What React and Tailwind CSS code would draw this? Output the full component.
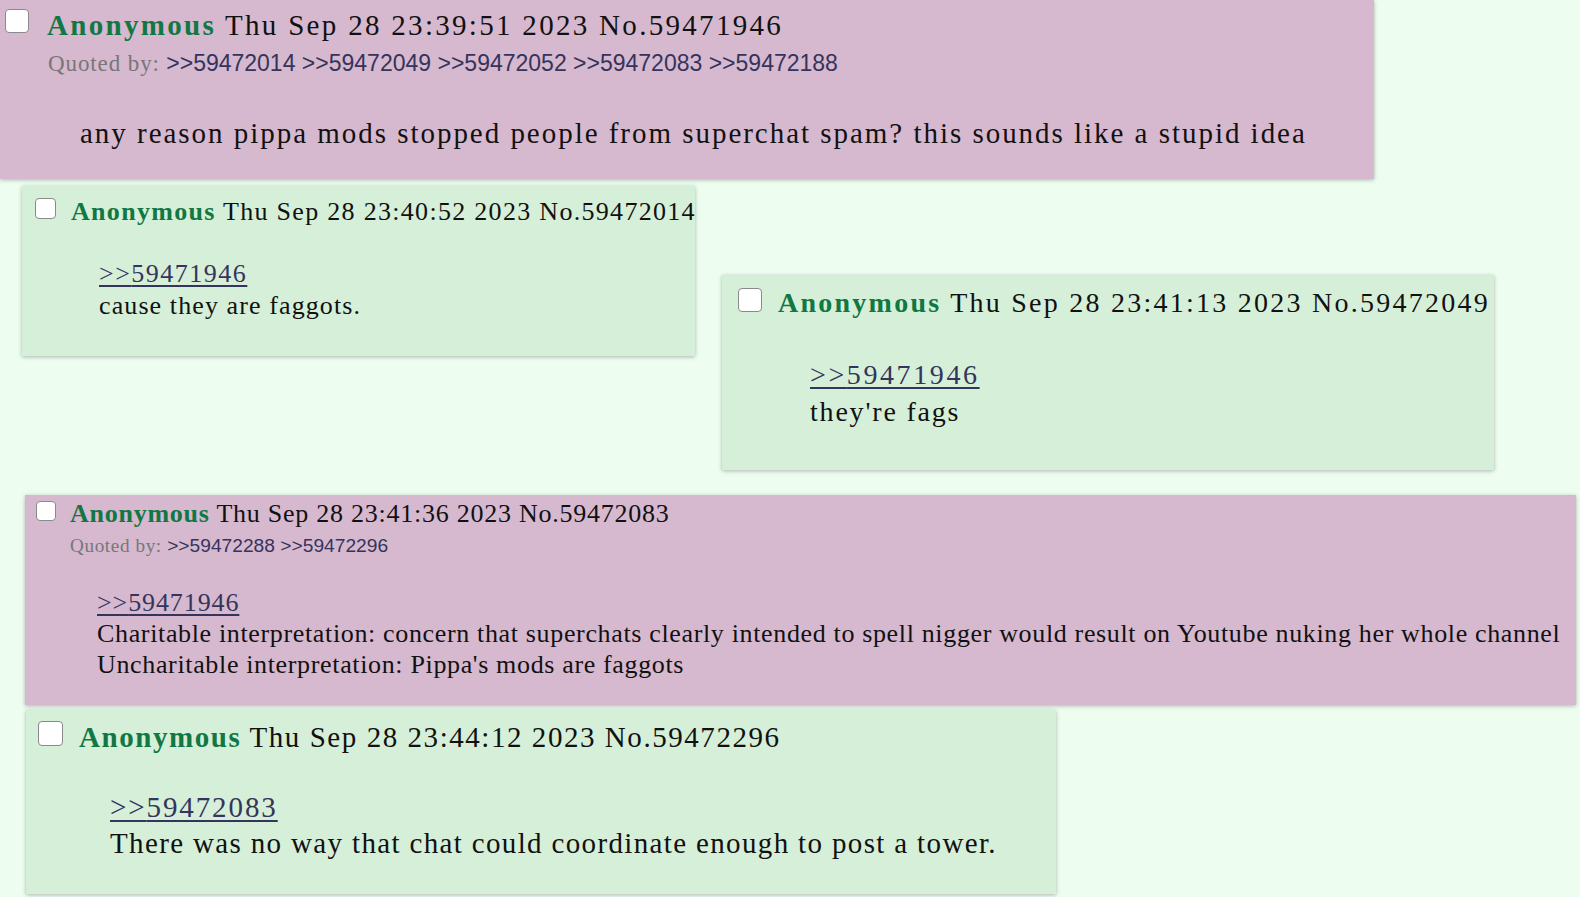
import React from 'react';

function Checkbox({ className }) {
  return (
    <span
      className={`block shrink-0 rounded-[4px] border-[1.5px] border-[#8a8a8a] bg-white ${className}`}
    />
  );
}

function Backlink({ id }) {
  return (
    <span className="font-['Liberation_Sans',Arial,sans-serif] text-[#34345c]">{' '}&gt;&gt;{id}</span>
  );
}

function QuoteLink({ id, className }) {
  return (
    <div className={className}>
      <span className="text-[#34345c] underline decoration-2 underline-offset-[3px]">&gt;&gt;{id}</span>
    </div>
  );
}

function Header({ date, no, className }) {
  return (
    <div className={`whitespace-nowrap ${className}`}>
      <span className="font-bold text-[#117743]">Anonymous</span> {date} No.{no}
    </div>
  );
}

export default function App() {
  return (
    <div className="h-[897px] w-[1580px] overflow-hidden bg-[#edfdf0] font-['Liberation_Serif','Times_New_Roman',serif] text-[#111]">
      {/* highlighted reply */}
      <div className="h-[179px] w-[1374px] bg-[#d6b8cf] pt-[7px] shadow-[0_1px_4px_rgba(0,0,0,0.28)]">
        <div className="flex items-start pl-[5px]">
          <Checkbox className="mt-[2px] h-[24px] w-[24px]" />
          <Header
            date="Thu Sep 28 23:39:51 2023"
            no="59471946"
            className="ml-[18px] text-[29px] leading-[36px] tracking-[2.3px]"
          />
        </div>
        <div className="mt-[6px] whitespace-nowrap pl-[48px] text-[23px] leading-[28px]">
          <span className="tracking-[0.9px] text-[#777]">Quoted by:</span>
          <Backlink id="59472014" />
          <Backlink id="59472049" />
          <Backlink id="59472052" />
          <Backlink id="59472083" />
          <Backlink id="59472188" />
        </div>
        <div className="mt-[37px] whitespace-nowrap pl-[80px] text-[29px] leading-[36px] tracking-[1.97px]">
          any reason pippa mods stopped people from superchat spam? this sounds like a stupid idea
        </div>
      </div>

      {/* two replies side by side */}
      <div className="mt-[7px] flex items-start">
        <div className="ml-[22px] h-[170px] w-[673px] shrink-0 bg-[#d6efd8] pt-[10px] shadow-[0_1px_4px_rgba(0,0,0,0.28)]">
          <div className="flex items-start pl-[13px]">
            <Checkbox className="mt-[2px] h-[21px] w-[21px]" />
            <Header
              date="Thu Sep 28 23:40:52 2023"
              no="59472014"
              className="ml-[15px] text-[26px] leading-[32px] tracking-[1.3px]"
            />
          </div>
          <QuoteLink
            id="59471946"
            className="mt-[30px] pl-[77px] text-[26px] leading-[32px] tracking-[1.5px]"
          />
          <div className="pl-[77px] text-[26px] leading-[32px] tracking-[1.1px]">cause they are faggots.</div>
        </div>

        <div className="ml-[27px] mt-[89px] h-[195px] w-[772px] shrink-0 bg-[#d6efd8] pt-[11px] shadow-[0_1px_4px_rgba(0,0,0,0.28)]">
          <div className="flex items-start pl-[16px]">
            <Checkbox className="mt-[2px] h-[24px] w-[24px]" />
            <Header
              date="Thu Sep 28 23:41:13 2023"
              no="59472049"
              className="ml-[16px] text-[28px] leading-[34px] tracking-[2.25px]"
            />
          </div>
          <QuoteLink
            id="59471946"
            className="mt-[36px] pl-[88px] text-[28px] leading-[37px] tracking-[2.6px]"
          />
          <div className="pl-[88px] text-[28px] leading-[37px] tracking-[1.8px]">they're fags</div>
        </div>
      </div>

      {/* highlighted reply */}
      <div className="ml-[25px] mt-[25px] h-[210px] w-[1551px] bg-[#d6b8cf] pt-[3px] shadow-[0_1px_4px_rgba(0,0,0,0.28)]">
        <div className="flex items-start pl-[11px]">
          <Checkbox className="mt-[3px] h-[20px] w-[20px]" />
          <Header
            date="Thu Sep 28 23:41:36 2023"
            no="59472083"
            className="ml-[14px] text-[26px] leading-[32px] tracking-[0.75px]"
          />
        </div>
        <div className="mt-[4px] whitespace-nowrap pl-[45px] text-[19.2px] leading-[24px]">
          <span className="tracking-[0.6px] text-[#777]">Quoted by:</span>
          <Backlink id="59472288" />
          <Backlink id="59472296" />
        </div>
        <QuoteLink
          id="59471946"
          className="mt-[29px] pl-[72px] text-[26px] leading-[31px] tracking-[0.9px]"
        />
        <div className="whitespace-nowrap pl-[72px] text-[26px] leading-[31px] tracking-[0.65px]">
          Charitable interpretation: concern that superchats clearly intended to spell nigger would result on Youtube nuking her whole channel
          <br />
          Uncharitable interpretation: Pippa's mods are faggots
        </div>
      </div>

      {/* last reply */}
      <div className="ml-[26px] mt-[5px] h-[184px] w-[1030px] bg-[#d6efd8] pt-[9px] shadow-[0_1px_4px_rgba(0,0,0,0.28)]">
        <div className="flex items-start pl-[12px]">
          <Checkbox className="mt-[2px] h-[25px] w-[25px]" />
          <Header
            date="Thu Sep 28 23:44:12 2023"
            no="59472296"
            className="ml-[16px] text-[29px] leading-[36px] tracking-[1.55px]"
          />
        </div>
        <QuoteLink
          id="59472083"
          className="mt-[34px] pl-[84px] text-[29px] leading-[36px] tracking-[1.9px]"
        />
        <div className="whitespace-nowrap pl-[84px] text-[29px] leading-[36px] tracking-[1.35px]">
          There was no way that chat could coordinate enough to post a tower.
        </div>
      </div>
    </div>
  );
}
